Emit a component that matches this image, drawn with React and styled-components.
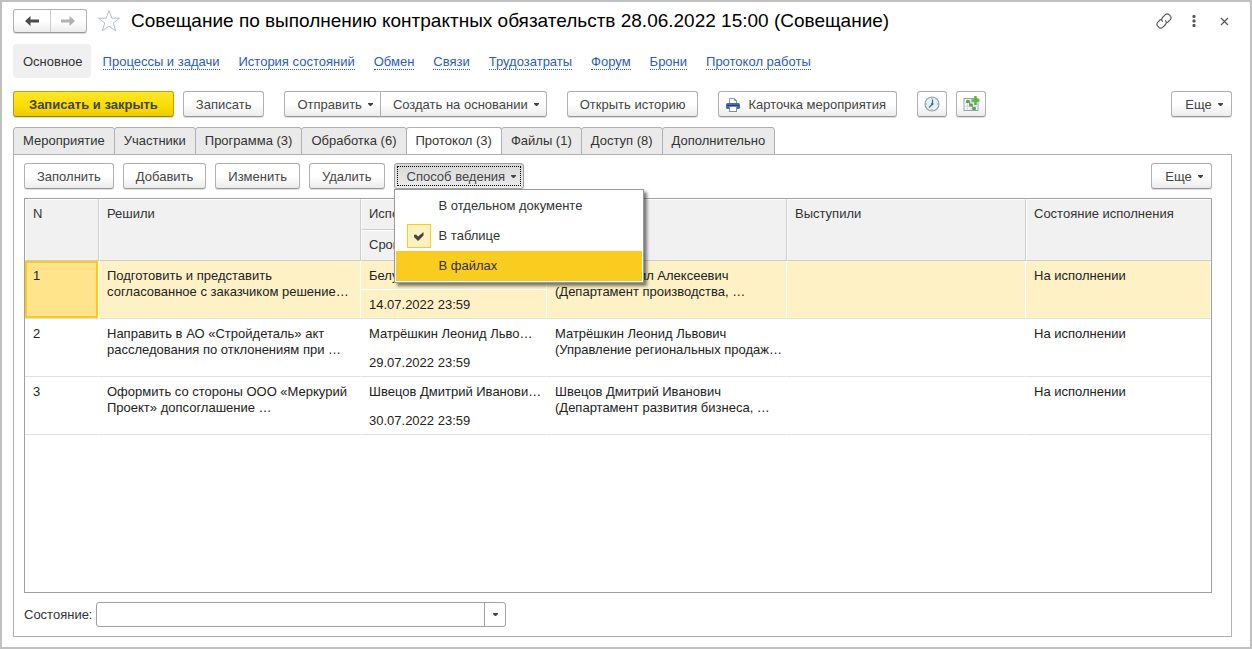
import React from "react"
import styled, { createGlobalStyle, css } from "styled-components"

const GlobalStyle = createGlobalStyle`
  *, *::before, *::after {
    box-sizing: border-box;
  }

  body {
    margin: 0;
    background: #fff;
    color: #333;
    font: 13px/16px "Liberation Sans", Arial, sans-serif;
  }

  button, input {
    font: inherit;
    color: inherit;
  }
`

const Window = styled.div`
  min-height: 100vh;
  display: flex;
  flex-direction: column;
  padding: 7px 18px 10px 11px;
  border: 2px solid #c0c0c0;
`

const TitleBar = styled.header`
  display: flex;
  align-items: center;
  height: 24px;
`

const buttonFace = css`
  border: 1px solid #b0b0b0;
  border-bottom-color: #999;
  border-radius: 3px;
  background: linear-gradient(#fff 50%, #ececec);
  box-shadow: 0 1px 0 #ddd;
`

const History = styled.div`
  ${buttonFace}
  display: flex;
  width: 74px;
  height: 24px;
`

const HistoryButton = styled.button`
  flex: 1;
  display: flex;
  align-items: center;
  justify-content: center;
  padding: 0;
  border: 0;
  background: none;
  color: ${props => (props.$dim ? "#b0b0b0" : "#4a4a4a")};

  & + & {
    border-left: 1px solid #ccc;
  }
`

const BareButton = styled.button`
  display: flex;
  align-items: center;
  justify-content: center;
  width: 24px;
  height: 24px;
  padding: 0;
  border: 0;
  background: none;
  color: #555;
`

const Title = styled.h1`
  flex: 1;
  margin: 0 0 0 10px;
  font-size: 19px;
  line-height: 24px;
  font-weight: normal;
  color: #000;
  white-space: nowrap;
`

const WindowTools = styled.div`
  display: flex;
  gap: 6px;
  margin-right: -4px;
`

const StarButton = styled(BareButton)`
  margin-left: 10px;
`

const Sections = styled.nav`
  display: flex;
  align-items: center;
  gap: 19px;
  margin-top: 11px;
`

const CurrentSection = styled.span`
  display: flex;
  align-items: center;
  height: 34px;
  margin-right: -7px;
  padding: 2px 8px 0 10px;
  border-radius: 4px;
  background: #f0f0f0;
`

const SectionLink = styled.a`
  margin-top: 2px;
  line-height: 14px;
  color: #2a5cc0;
  text-decoration: none;
  border-bottom: 1px dotted #2a5cc0;
  white-space: nowrap;
`

const CommandBar = styled.div`
  display: flex;
  gap: 20px;
  margin-top: ${props => props.$top || 0}px;
`

const Group = styled.div`
  display: flex;
  gap: 9px;
  margin-left: ${props => (props.$end ? "auto" : 0)};
`

const Joined = styled.div`
  display: flex;

  button:first-child {
    border-radius: 3px 0 0 3px;
  }

  button:last-child {
    margin-left: -1px;
    border-radius: 0 3px 3px 0;
  }
`

const Button = styled.button`
  ${buttonFace}
  display: flex;
  align-items: center;
  justify-content: center;
  gap: 5px;
  height: 26px;
  min-width: 61px;
  padding: ${props => (props.$menu ? "2px 6px 0 12px" : "2px 12px 0")};
  color: #444;
  white-space: nowrap;

  ${props =>
    props.$primary &&
    css`
      padding: 2px 15px 0;
      border-color: #b8a000;
      border-bottom-color: #998500;
      background: linear-gradient(#ffe72e, #fbdc00 60%, #eccb00);
      font-weight: bold;
    `}

  ${props =>
    props.$pressed &&
    css`
      border-color: #a0a0a0;
      background: linear-gradient(#d8d8d8, #ececec);
      outline: 1px dotted #000;
      outline-offset: -4px;
    `}
`

const IconButton = styled(Button)`
  width: 30px;
  min-width: 0;
  padding: 0;
`

const PrintButton = styled(Button)`
  gap: 7px;
  padding: 2px 10px 0 6px;
`

const Tabs = styled.div`
  display: flex;
  height: 28px;
  margin: 10px 0 -1px;
`

const Tab = styled.button`
  padding: 0 9px;
  border: 1px solid #b0b0b0;
  border-bottom-color: ${props => (props.$active ? "#fff" : "#b0b0b0")};
  border-radius: 3px 3px 0 0;
  background: ${props => (props.$active ? "#fff" : "#eaeaea")};
  white-space: nowrap;

  & + & {
    margin-left: -1px;
  }
`

const Panel = styled.main`
  flex: 1;
  display: flex;
  flex-direction: column;
  padding: 8px 19px 9px 10px;
  border: 1px solid #b0b0b0;
`

const MenuAnchor = styled.div`
  position: relative;
`

const Menu = styled.div`
  position: absolute;
  top: 100%;
  left: 0;
  z-index: 1;
  width: 250px;
  padding: 1px;
  border: 1px solid #999;
  background: #fff;
  box-shadow: 3px 3px 3px rgba(0, 0, 0, 0.5);
`

const MenuItem = styled.button`
  display: flex;
  align-items: center;
  gap: 8px;
  width: 100%;
  height: 30px;
  padding: 0 11px;
  border: 0;
  background: ${props => (props.$hover ? "#facc20" : "none")};
  text-align: left;
`

const CheckSlot = styled.span`
  display: flex;
  align-items: center;
  justify-content: center;
  width: 24px;
  height: 24px;
  border: 1px solid ${props => (props.$on ? "#facc20" : "transparent")};
  background: ${props => (props.$on ? "#fdf1c4" : "none")};
`

const TableBox = styled.div`
  flex: 1;
  margin-top: 9px;
  border: 1px solid #a0a0a0;
`

const Table = styled.table`
  width: 100%;
  table-layout: fixed;
  border-collapse: separate;
  border-spacing: 0;
`

const HeadCell = styled.th`
  height: 31px;
  padding: 6px 7px;
  border: 1px solid #fff;
  border-right-color: #ccc;
  border-bottom-color: #ccc;
  background: #f1f1f1;
  font-weight: normal;
  text-align: left;
  vertical-align: top;
  white-space: nowrap;

  &:last-child {
    border-right: 0;
  }
`

const Cell = styled.td`
  height: 29px;
  padding: 7px 8px 0;
  border-right: 1px solid ${props => (props.$selected ? "#fff" : "transparent")};
  border-bottom: 1px solid
    ${props => (props.$upper ? (props.$selected ? "#fff" : "transparent") : "#e0e0e0")};
  background: ${props => (props.$selected ? "#fef1c6" : "none")};
  color: #222;
  overflow: hidden;
  vertical-align: top;
  white-space: nowrap;

  ${props =>
    props.$focus &&
    css`
      background: #ffe48c;
      box-shadow: inset 0 0 0 2px #fac924;
    `}
`

const StateRow = styled.div`
  display: flex;
  align-items: center;
  gap: 4px;
  margin-top: 9px;
`

const Combo = styled.div`
  display: flex;
  width: 410px;
  height: 25px;
  border: 1px solid #a0a0a0;
  border-radius: 3px;
`

const ComboInput = styled.input`
  flex: 1;
  min-width: 0;
  padding: 0 6px;
  border: 0;
  background: none;
`

const ComboButton = styled.button`
  display: flex;
  align-items: center;
  justify-content: center;
  width: 21px;
  padding: 0;
  border: 0;
  border-left: 1px solid #a0a0a0;
  background: none;
`

const Caret = () => (
  <svg width="7" height="4" viewBox="0 0 7 4" fill="#444">
    <path d="M1 0h5v1L4 3H3L1 1z" />
  </svg>
)

const Arrow = ({ flip }) => (
  <svg width="16" height="12" viewBox="0 0 16 12">
    <path
      d={
        flip
          ? "M15 6 9.500 1v3.500H1v3h8.500V11z"
          : "M1 6l5.500-5v3.500H15v3H6.500V11z"
      }
      fill="currentColor"
    />
  </svg>
)

const Star = () => (
  <svg width="24" height="24" viewBox="0 0 24 24">
    <path
      d="M12 1.500l2.700 7.700h7.800l-6.300 4.800 2.500 7.800L12 17.200l-6.700 4.600L7.800 14 1.500 9.200h7.800z"
      fill="#fff"
      stroke="#b4bcc4"
    />
  </svg>
)

const LinkIcon = () => (
  <svg
    width="16"
    height="16"
    viewBox="0 0 16 16"
    fill="none"
    stroke="#555"
    strokeWidth="1.100"
    strokeLinecap="round"
  >
    <path d="M6.500 4.500l2.600-2.600a3 3 0 0 1 4.200 0l.8.800a3 3 0 0 1 0 4.200L11.500 9.500" />
    <path d="M9.500 11.500l-2.600 2.600a3 3 0 0 1-4.200 0l-.8-.8a3 3 0 0 1 0-4.200L4.500 6.500" />
    <path d="M6.500 4.500a3 3 0 0 0 0 4M9.500 11.500a3 3 0 0 0 0-4" />
  </svg>
)

const Dots = () => (
  <svg width="4" height="12" viewBox="0 0 4 12" fill="#555">
    <rect x="0.500" width="3" height="3" rx="1" />
    <rect x="0.500" y="4.500" width="3" height="3" rx="1" />
    <rect x="0.500" y="9" width="3" height="3" rx="1" />
  </svg>
)

const Cross = () => (
  <svg width="9" height="9" viewBox="0 0 9 9" stroke="#555" strokeWidth="1.200">
    <path d="M1 1l7 7M8 1L1 8" />
  </svg>
)

const Printer = () => (
  <svg width="16" height="16" viewBox="0 0 16 16">
    <path d="M4.500 7V1.500h5l2 2V7" fill="#fff" stroke="#8296aa" />
    <path d="M9.500 1.500v2h2" fill="none" stroke="#8296aa" />
    <rect x="1" y="6" width="14" height="6" rx="1.500" fill="#4a69ac" />
    <path d="M2 8.500h12" stroke="#24407e" />
    <rect x="4.500" y="9.500" width="7" height="5" fill="#fff" stroke="#7890a8" />
  </svg>
)

const Clock = () => (
  <svg width="16" height="16" viewBox="0 0 16 16">
    <circle cx="8" cy="8" r="7" fill="#e6f0f8" stroke="#8f9fac" strokeWidth="1.200" />
    <path
      d="M8 2v1M8 13v1M2 8h1M13 8h1"
      stroke="#d89040"
      strokeWidth="1.200"
    />
    <path d="M8.500 3.500V8L5 11.500" fill="none" stroke="#3468a8" strokeWidth="1.200" />
    <circle cx="8.300" cy="8" r="1.200" fill="#3468a8" />
  </svg>
)

const PlanIcon = () => (
  <svg width="17" height="16" viewBox="0 0 17 16">
    <rect x="1" y="2.500" width="14" height="12" fill="#f2f6f8" stroke="#93a2ae" />
    <path d="M4.500 3v11M8 3v11M11.500 3v11M1 6.500h14M1 10.500h14" stroke="#d4dce2" />
    <rect x="3" y="4" width="4" height="3" rx="1" fill="#58a84c" />
    <rect x="6" y="7.500" width="4" height="3" rx="1" fill="#58a84c" />
    <rect x="9" y="11" width="4" height="3" rx="1" fill="#58a84c" />
    <path d="M5 6l6 6" stroke="#58a84c" />
    <path d="M12.500 0v9M8.500 4.500h8" stroke="#5cb048" strokeWidth="2.500" />
  </svg>
)

const CheckMark = () => (
  <svg width="12" height="11" viewBox="0 0 12 11" fill="#444">
    <path d="M1 4l2-.500 2 2L10.500 1v3.500L5 10 1 6z" />
  </svg>
)

const links = [
  "Процессы и задачи",
  "История состояний",
  "Обмен",
  "Связи",
  "Трудозатраты",
  "Форум",
  "Брони",
  "Протокол работы",
]

const tabs = [
  "Мероприятие",
  "Участники",
  "Программа (3)",
  "Обработка (6)",
  "Протокол (3)",
  "Файлы (1)",
  "Доступ (8)",
  "Дополнительно",
]

const columns = [74, 262, 186, 240, 239, 185]

const rows = [
  {
    n: 1,
    decision: ["Подготовить и представить", "согласованное с заказчиком решение…"],
    person: "Белугин…",
    date: "14.07.2022 23:59",
    owner: ["Белугин Михаил Алексеевич", "(Департамент производства, …"],
  },
  {
    n: 2,
    decision: ["Направить в АО «Стройдеталь» акт", "расследования по отклонениям при …"],
    person: "Матрёшкин Леонид Льво…",
    date: "29.07.2022 23:59",
    owner: ["Матрёшкин Леонид Львович", "(Управление региональных продаж…"],
  },
  {
    n: 3,
    decision: ["Оформить со стороны ООО «Меркурий", "Проект» допсоглашение …"],
    person: "Швецов Дмитрий Иванови…",
    date: "30.07.2022 23:59",
    owner: ["Швецов Дмитрий Иванович", "(Департамент развития бизнеса, …"],
  },
]

const Lines = ({ text }) => (
  <>
    {text[0]}
    <br />
    {text[1]}
  </>
)

const MenuButton = ({ children, ...rest }) => (
  <Button $menu aria-haspopup="menu" {...rest}>
    {children}
    <Caret />
  </Button>
)

const Row = ({ row, selected }) => (
  <>
    <tr>
      <Cell rowSpan={2} $selected={selected} $focus={selected}>
        {row.n}
      </Cell>
      <Cell rowSpan={2} $selected={selected}>
        <Lines text={row.decision} />
      </Cell>
      <Cell $upper $selected={selected}>
        {row.person}
      </Cell>
      <Cell rowSpan={2} $selected={selected}>
        <Lines text={row.owner} />
      </Cell>
      <Cell rowSpan={2} $selected={selected} />
      <Cell rowSpan={2} $selected={selected}>
        На исполнении
      </Cell>
    </tr>
    <tr>
      <Cell $selected={selected}>{row.date}</Cell>
    </tr>
  </>
)

export default function App() {
  return (
    <>
      <GlobalStyle />
      <Window>
        <TitleBar>
          <History>
            <HistoryButton aria-label="Назад">
              <Arrow />
            </HistoryButton>
            <HistoryButton $dim aria-label="Вперед">
              <Arrow flip />
            </HistoryButton>
          </History>
          <StarButton aria-label="В избранное">
            <Star />
          </StarButton>
          <Title>
            Совещание по выполнению контрактных обязательств 28.06.2022 15:00
            (Совещание)
          </Title>
          <WindowTools>
            <BareButton aria-label="Ссылка">
              <LinkIcon />
            </BareButton>
            <BareButton aria-label="Меню">
              <Dots />
            </BareButton>
            <BareButton aria-label="Закрыть">
              <Cross />
            </BareButton>
          </WindowTools>
        </TitleBar>

        <Sections>
          <CurrentSection>Основное</CurrentSection>
          {links.map(link => (
            <SectionLink href="#" key={link}>
              {link}
            </SectionLink>
          ))}
        </Sections>

        <CommandBar $top={13}>
          <Group>
            <Button $primary>Записать и закрыть</Button>
            <Button>Записать</Button>
          </Group>
          <Joined>
            <MenuButton>Отправить</MenuButton>
            <MenuButton>Создать на основании</MenuButton>
          </Joined>
          <Button>Открыть историю</Button>
          <PrintButton>
            <Printer />
            Карточка мероприятия
          </PrintButton>
          <Group>
            <IconButton aria-label="Время">
              <Clock />
            </IconButton>
            <IconButton aria-label="Добавить в план">
              <PlanIcon />
            </IconButton>
          </Group>
          <Group $end>
            <MenuButton>Еще</MenuButton>
          </Group>
        </CommandBar>

        <Tabs role="tablist">
          {tabs.map((tab, i) => (
            <Tab key={tab} role="tab" aria-selected={i === 4} $active={i === 4}>
              {tab}
            </Tab>
          ))}
        </Tabs>

        <Panel>
          <CommandBar>
            <Group>
              <Button>Заполнить</Button>
              <Button>Добавить</Button>
              <Button>Изменить</Button>
              <Button>Удалить</Button>
              <MenuAnchor>
                <MenuButton $pressed aria-expanded="true">
                  Способ ведения
                </MenuButton>
                <Menu role="menu">
                  <MenuItem role="menuitemradio" aria-checked="false">
                    <CheckSlot />В отдельном документе
                  </MenuItem>
                  <MenuItem role="menuitemradio" aria-checked="true">
                    <CheckSlot $on>
                      <CheckMark />
                    </CheckSlot>
                    В таблице
                  </MenuItem>
                  <MenuItem role="menuitemradio" aria-checked="false" $hover>
                    <CheckSlot />В файлах
                  </MenuItem>
                </Menu>
              </MenuAnchor>
            </Group>
            <Group $end>
              <MenuButton>Еще</MenuButton>
            </Group>
          </CommandBar>

          <TableBox>
            <Table>
              <colgroup>
                {columns.map((width, i) => (
                  <col key={i} width={width} />
                ))}
              </colgroup>
              <thead>
                <tr>
                  <HeadCell rowSpan={2}>N</HeadCell>
                  <HeadCell rowSpan={2}>Решили</HeadCell>
                  <HeadCell>Исполнитель</HeadCell>
                  <HeadCell rowSpan={2} aria-label="Ответственный" />
                  <HeadCell rowSpan={2}>Выступили</HeadCell>
                  <HeadCell rowSpan={2}>Состояние исполнения</HeadCell>
                </tr>
                <tr>
                  <HeadCell>Срок</HeadCell>
                </tr>
              </thead>
              <tbody>
                {rows.map((row, i) => (
                  <Row key={row.n} row={row} selected={i === 0} />
                ))}
              </tbody>
            </Table>
          </TableBox>

          <StateRow>
            <label htmlFor="state">Состояние:</label>
            <Combo>
              <ComboInput id="state" />
              <ComboButton aria-label="Выбрать состояние">
                <Caret />
              </ComboButton>
            </Combo>
          </StateRow>
        </Panel>
      </Window>
    </>
  )
}
